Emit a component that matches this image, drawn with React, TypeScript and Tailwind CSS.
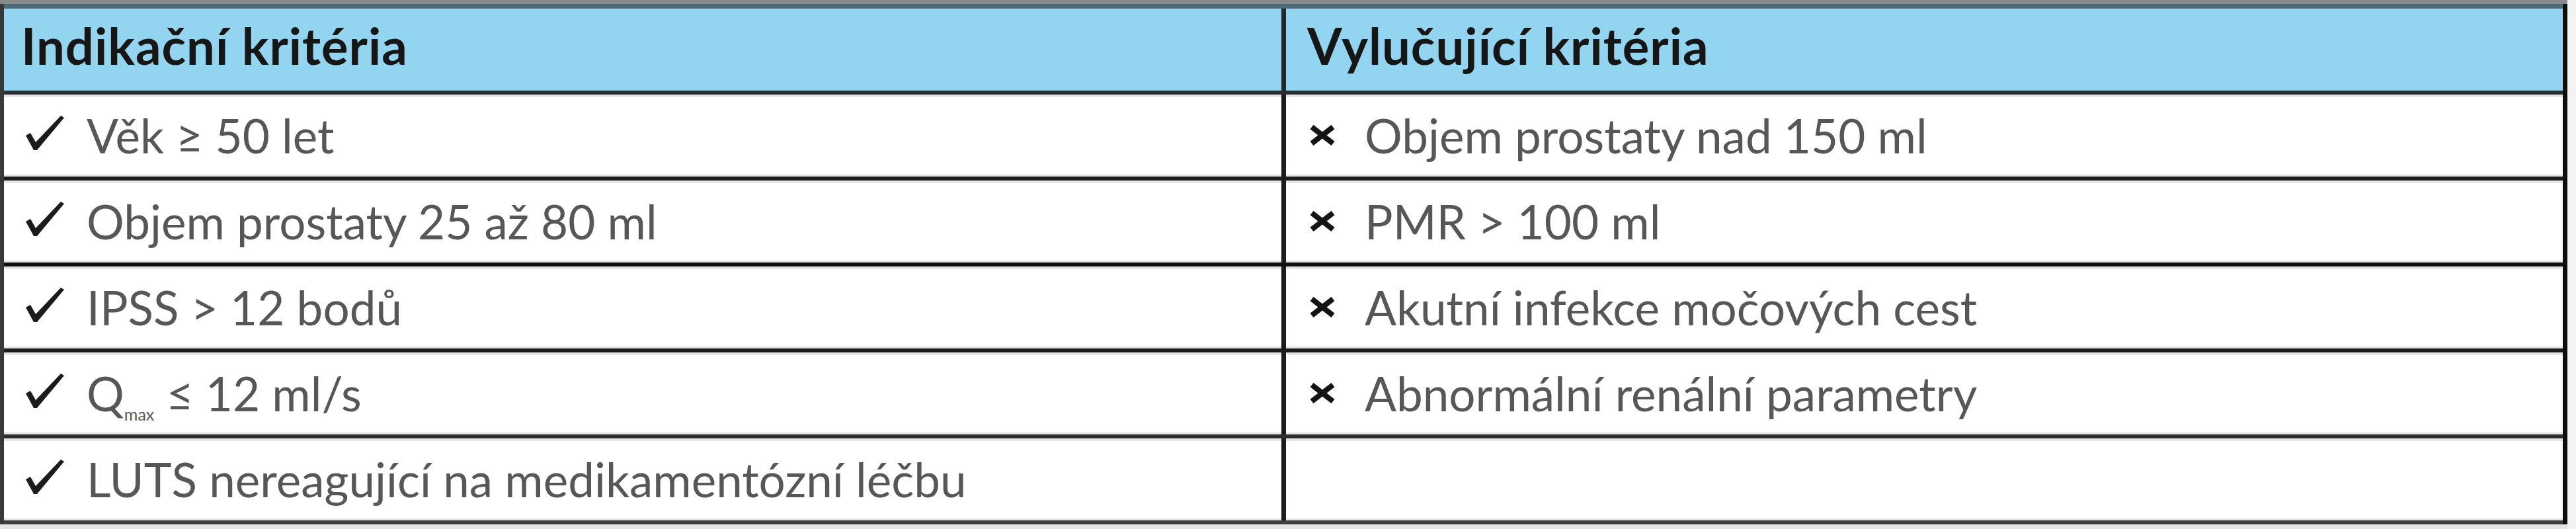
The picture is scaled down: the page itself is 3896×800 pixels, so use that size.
import React from "react";

function Check() {
  return (
    <svg width="59" height="53" viewBox="0 0 59 53" className="block">
      <path d="M1 30 L8 26 L16 40 L54 0 L59 3 L18 52 L13 52 Z" fill="#1b1b1b" />
    </svg>
  );
}

function Cross() {
  return (
    <svg width="44" height="31" viewBox="0 0 44 31" className="block">
      <path d="M6 3 L38 28 M38 3 L6 28" stroke="#141414" strokeWidth="8" fill="none" />
    </svg>
  );
}

function Qmax() {
  return (
    <span>
      Q<span className="relative top-[14px] text-[25px] leading-none">max</span> ≤ 12 ml/s
    </span>
  );
}

const left: React.ReactNode[] = [
  "Věk ≥ 50 let",
  "Objem prostaty 25 až 80 ml",
  "IPSS > 12 bodů",
  <Qmax key="q" />,
  "LUTS nereagující na medikamentózní léčbu",
];

const right: (string | null)[] = [
  "Objem prostaty nad 150 ml",
  "PMR > 100 ml",
  "Akutní infekce močových cest",
  "Abnormální renální parametry",
  null,
];

const rowBorders = ["border-[#1c1c1c]", "border-[#111111]", "border-[#1a1a1a]", "border-[#2e2e2e]", "border-[#3e3e3e]"];

export default function App() {
  return (
    <div className="w-[3896px] h-[800px] bg-[#f3f3f3] overflow-hidden font-['Lato','Open_Sans',sans-serif]">
      <div className="w-[3883px]">
        <div className="h-[6px] bg-[#8a8a8a]" />
        <div className="bg-white border-l-[6px] border-l-[#383838] border-r-[7px] border-r-[#0e0e0e]">
          {/* header */}
          <div className="flex bg-[#93d4f0] border-t-[7px] border-t-[#4d6a79] border-b-[6px] border-b-[#2a2d2f] text-[76px] leading-[1.2] font-bold tracking-[1px] text-[#161616]">
            <div className="w-[1939px] h-[124px] flex items-center pl-[26px] pb-[12px] border-r-[7px] border-r-[#1e2a30]">
              Indikační kritéria
            </div>
            <div className="flex-1 h-[124px] flex items-center pl-[32px] pb-[12px]">
              Vylučující kritéria
            </div>
          </div>
          {left.map((l, i) => (
            <div
              key={i}
              className={`flex border-b-[6px] ${rowBorders[i]} text-[71px] leading-[1.2] text-[#575757]`}
            >
              <div className="w-[1939px] h-[124px] flex pl-[32px] border-r-[7px] border-r-[#1c1c1c] shadow-[inset_0_-3px_0_#e3e3e3,inset_0_4px_0_#e6e6e6]">
                <div className="self-start mt-[32px] w-[59px] mr-[34px]">
                  <Check />
                </div>
                <div className="self-center">{l}</div>
              </div>
              <div className="flex-1 h-[124px] flex pl-[33px] shadow-[inset_0_-3px_0_#e3e3e3,inset_0_4px_0_#e6e6e6]">
                {right[i] !== null && (
                  <>
                    <div className="self-start mt-[46px] w-[44px] mr-[42px]">
                      <Cross />
                    </div>
                    <div className="self-center">{right[i]}</div>
                  </>
                )}
              </div>
            </div>
          ))}
        </div>
        <div className="h-[7px] bg-[#e4e4e4]" />
      </div>
    </div>
  );
}
